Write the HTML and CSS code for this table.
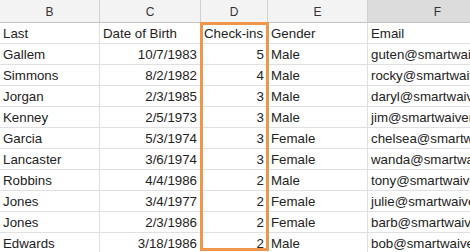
FILE: index.html
```html
<!DOCTYPE html>
<html>
<head>
<meta charset="utf-8">
<link rel="stylesheet" href="styles.css">
</head>
<body>
<div class="sheet">
  <div class="grid">
    <div class="hd">B</div><div class="hd">C</div><div class="hd">D</div><div class="hd">E</div><div class="hd sel">F</div>
    <div class="c">Last</div><div class="c">Date of Birth</div><div class="c">Check-ins</div><div class="c">Gender</div><div class="c">Email</div>
    <div class="c">Gallem</div><div class="c r">10/7/1983</div><div class="c r">5</div><div class="c">Male</div><div class="c">guten@smartwaiver.com</div>
    <div class="c">Simmons</div><div class="c r">8/2/1982</div><div class="c r">4</div><div class="c">Male</div><div class="c">rocky@smartwaiver.com</div>
    <div class="c">Jorgan</div><div class="c r">2/3/1985</div><div class="c r">3</div><div class="c">Male</div><div class="c">daryl@smartwaiver.com</div>
    <div class="c">Kenney</div><div class="c r">2/5/1973</div><div class="c r">3</div><div class="c">Male</div><div class="c">jim@smartwaiver.com</div>
    <div class="c">Garcia</div><div class="c r">5/3/1974</div><div class="c r">3</div><div class="c">Female</div><div class="c">chelsea@smartwaiver.com</div>
    <div class="c">Lancaster</div><div class="c r">3/6/1974</div><div class="c r">3</div><div class="c">Female</div><div class="c">wanda@smartwaiver.com</div>
    <div class="c">Robbins</div><div class="c r">4/4/1986</div><div class="c r">2</div><div class="c">Male</div><div class="c">tony@smartwaiver.com</div>
    <div class="c">Jones</div><div class="c r">3/4/1977</div><div class="c r">2</div><div class="c">Female</div><div class="c">julie@smartwaiver.com</div>
    <div class="c">Jones</div><div class="c r">2/3/1986</div><div class="c r">2</div><div class="c">Female</div><div class="c">barb@smartwaiver.com</div>
    <div class="c">Edwards</div><div class="c r">3/18/1986</div><div class="c r">2</div><div class="c">Male</div><div class="c">bob@smartwaiver.com</div>
  </div>
  <div class="highlight"></div>
</div>
</body>
</html>
```
FILE: styles.css
```css
html, body {
  margin: 0;
  padding: 0;
  background: #ffffff;
}
.sheet {
  position: relative;
  width: 470px;
  height: 252px;
  overflow: hidden;
  font-family: "Liberation Sans", Arial, sans-serif;
}
.grid {
  display: grid;
  grid-template-columns: 100px 101px 67px 100px 140px;
  grid-template-rows: 23px repeat(11, 21px);
  width: 508px;
}
.hd {
  background: #f3f3f3;
  border-right: 1px solid #d0d0d0;
  border-bottom: 1px solid #c4c4c4;
  color: #333333;
  font-size: 12px;
  display: flex;
  align-items: center;
  justify-content: center;
  padding-top: 1px;
  box-sizing: border-box;
}
.hd.sel {
  background: #dcdcdc;
}
.c {
  border-right: 1px solid #e0e0e0;
  border-bottom: 1px solid #e0e0e0;
  color: #222222;
  font-size: 13.3px;
  display: flex;
  align-items: center;
  padding: 1px 3px 0 3px;
  box-sizing: border-box;
  white-space: nowrap;
  overflow: hidden;
}
.c.r {
  justify-content: flex-end;
}
.highlight {
  position: absolute;
  left: 200px;
  top: 22px;
  width: 69px;
  height: 229px;
  border: 3px solid #f0964a;
  box-sizing: border-box;
}
```
